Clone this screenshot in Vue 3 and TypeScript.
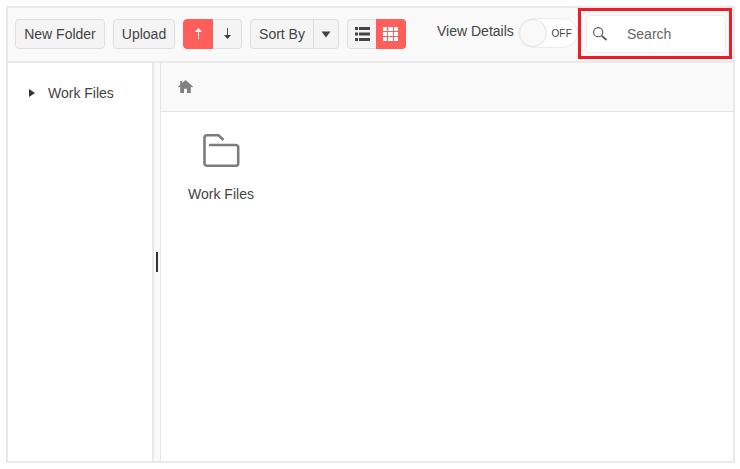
<script setup lang="ts">
const fileName = 'Work Files'
const gridCells = [0, 1, 2, 3, 4, 5, 6, 7, 8]
</script>

<template>
  <div class="page">
    <div class="manager">
      <header class="toolbar">
        <button class="btn new-folder">New Folder</button>
        <button class="btn upload">Upload</button>
        <div class="group sort-dir">
          <button class="seg active half">
            <svg width="9" height="11" viewBox="0 0 9 11"><path d="M4.500 0 8 4H5V11H4V4H1Z" fill="#fff" /></svg>
          </button>
          <button class="seg half last">
            <svg width="9" height="11" viewBox="0 0 9 11"><path d="M4 0h1v7H4Z" fill="#6b3a78" /><path d="M1 7h7L4.500 11Z" fill="#403a40" /></svg>
          </button>
        </div>
        <div class="group sort-by">
          <button class="seg sort-label">Sort By</button>
          <button class="seg caret-btn last">
            <svg width="10" height="7" viewBox="0 0 10 7"><path d="M0.500 0.500h9L5 6.500Z" fill="#444" /></svg>
          </button>
        </div>
        <div class="group views">
          <button class="seg view-list">
            <svg width="15" height="14" viewBox="0 0 15 14" fill="#444">
              <rect x="0" y="0" width="3" height="3" /><rect x="4" y="0" width="11" height="3" />
              <rect x="0" y="5.500" width="3" height="3" /><rect x="4" y="5.500" width="11" height="3" />
              <rect x="0" y="11" width="3" height="3" /><rect x="4" y="11" width="11" height="3" />
            </svg>
          </button>
          <button class="seg active view-grid last">
            <span class="grid-icon"><i v-for="c in gridCells" :key="c"></i></span>
          </button>
        </div>
        <span class="details-label">View Details</span>
        <div class="toggle">
          <span class="knob"></span>
          <span class="off">OFF</span>
        </div>
        <div class="search">
          <svg width="16" height="16" viewBox="0 0 16 16" fill="none" stroke="#555">
            <circle cx="6.200" cy="6.200" r="4.600" stroke-width="1.100" />
            <path d="M9.800 9.800 14.500 14" stroke-width="1.700" />
          </svg>
          <span class="search-text">Search</span>
        </div>
      </header>
      <div class="body">
        <aside class="tree">
          <div class="tree-row">
            <svg width="6" height="8" viewBox="0 0 6 8"><path d="M0 0 6 4 0 8Z" fill="#333" /></svg>
            <span>{{ fileName }}</span>
          </div>
        </aside>
        <div class="splitter"><span class="handle"></span></div>
        <main class="content">
          <div class="crumbs">
            <svg width="15" height="13" viewBox="0 0 15 13"><path d="M7.500 0 15 6.600 14 7.600 12.800 6.600V13H9V8.800H6V13H2.200V6.600L1 7.600 0 6.600 2.200 4.700V1H4.200V2.900Z" fill="#808080" /></svg>
          </div>
          <div class="files">
            <div class="file">
              <svg class="folder" width="37" height="35" viewBox="0 0 37 35" fill="none" stroke="#7c7c7c" stroke-width="2.600">
                <path d="M6 12H33A2.500 2.500 0 0 1 35.200 14.500V30.500A2.500 2.500 0 0 1 33 32.800H4A2.500 2.500 0 0 1 1.500 30.500V4.500A2.500 2.500 0 0 1 4 2.300H15.500L20.500 7" />
              </svg>
              <span>{{ fileName }}</span>
            </div>
          </div>
        </main>
      </div>
    </div>
    <div class="highlight"></div>
  </div>
</template>

<style>
html, body { margin: 0; background: #fff; }
</style>

<style scoped>
.page {
  position: relative;
  width: 740px;
  height: 469px;
  overflow: hidden;
  padding: 6px;
  box-sizing: border-box;
  font-family: "Liberation Sans", Arial, sans-serif;
  font-size: 14px;
  color: #333;
}
.manager {
  width: 729px;
  height: 457px;
  box-sizing: border-box;
  border: 2px solid #e9e9e9;
  display: flex;
  flex-direction: column;
}
.toolbar {
  height: 55px;
  box-sizing: border-box;
  flex: none;
  display: flex;
  align-items: center;
  background: #f9f9f9;
  border-bottom: 2px solid #e9e9e9;
  padding: 0 0 1px 7px;
}
button {
  font: inherit;
  color: #444;
  margin: 0;
  padding: 0;
}
.btn, .seg {
  height: 30px;
  box-sizing: border-box;
  background: #f4f4f4;
  border: 1px solid #dedede;
  display: flex;
  align-items: center;
  justify-content: center;
}
.btn { border-radius: 4px; }
.new-folder { width: 90px; margin-right: 8px; }
.upload { width: 62px; margin-right: 8px; }
.group { display: flex; }
.group .seg:first-child { border-radius: 4px 0 0 4px; }
.group .seg.last { border-radius: 0 4px 4px 0; border-left-width: 0; }
.seg.active { background: #ff5e5b; border-color: #ff5e5b; }
.half { width: 30px; padding-bottom: 2px; }
.half.last { width: 29px; }
.sort-dir { margin-right: 8px; }
.sort-label { width: 64px; }
.caret-btn { width: 25px; }
.sort-by { margin-right: 8px; }
.view-list { width: 29px; border-right-width: 0; }
.view-grid { width: 30px; }
.grid-icon {
  display: grid;
  grid-template-columns: repeat(3, 4.330px);
  grid-auto-rows: 4.330px;
  gap: 1px;
}
.grid-icon i { background: #fff; }
.details-label {
  margin-left: 31px;
  margin-right: 4px;
  width: 77px;
  white-space: nowrap;
  color: #444;
  margin-bottom: 6px;
}
.toggle {
  width: 60px;
  height: 30px;
  box-sizing: border-box;
  border: 1px solid #ececec;
  border-radius: 15px;
  background: #fff;
  display: flex;
  align-items: center;
  justify-content: space-between;
  margin-bottom: 2px;
}
.knob {
  width: 28px;
  height: 28px;
  box-sizing: border-box;
  border: 1px solid #e2e2e2;
  border-radius: 50%;
  background: #f9f9f9;
}
.off { font-size: 10px; color: #444; margin-right: 5px; letter-spacing: 0.2px; }
.search {
  margin-left: 8px;
  width: 140px;
  height: 38px;
  box-sizing: border-box;
  background: #fff;
  border: 1px solid #ececec;
  border-radius: 4px;
  display: flex;
  align-items: center;
  padding-left: 5px;
}
.search-text { margin-left: 19px; color: #666; }
.body { flex: 1; display: flex; min-height: 0; }
.tree {
  width: 144px;
  flex: none;
  box-sizing: border-box;
  padding-top: 22px;
  padding-left: 21px;
}
.tree-row {
  display: flex;
  align-items: center;
  gap: 13px;
  height: 16px;
  color: #444;
}
.splitter {
  width: 9px;
  flex: none;
  box-sizing: border-box;
  background: #f9f9f9;
  border-left: 2px solid #e9e9e9;
  border-right: 1px solid #e4e4e4;
  display: flex;
  align-items: center;
  justify-content: center;
}
.handle { width: 2px; height: 20px; background: #333; margin-left: -1px; }
.content { flex: 1; display: flex; flex-direction: column; min-width: 0; }
.crumbs {
  height: 49px;
  flex: none;
  box-sizing: border-box;
  background: #f9f9f9;
  border-bottom: 1px solid #e4e4e4;
  padding: 0 0 2px 17px;
  display: flex;
  align-items: center;
}
.files { flex: 1; padding: 21px 0 0 27px; }
.file {
  width: 66px;
  display: flex;
  flex-direction: column;
  align-items: center;
  gap: 18px;
  white-space: nowrap;
  color: #444;
}
.highlight {
  position: absolute;
  left: 578px;
  top: 8px;
  width: 154px;
  height: 51px;
  box-sizing: border-box;
  border: 3px solid #ee1c25;
  pointer-events: none;
}
</style>
